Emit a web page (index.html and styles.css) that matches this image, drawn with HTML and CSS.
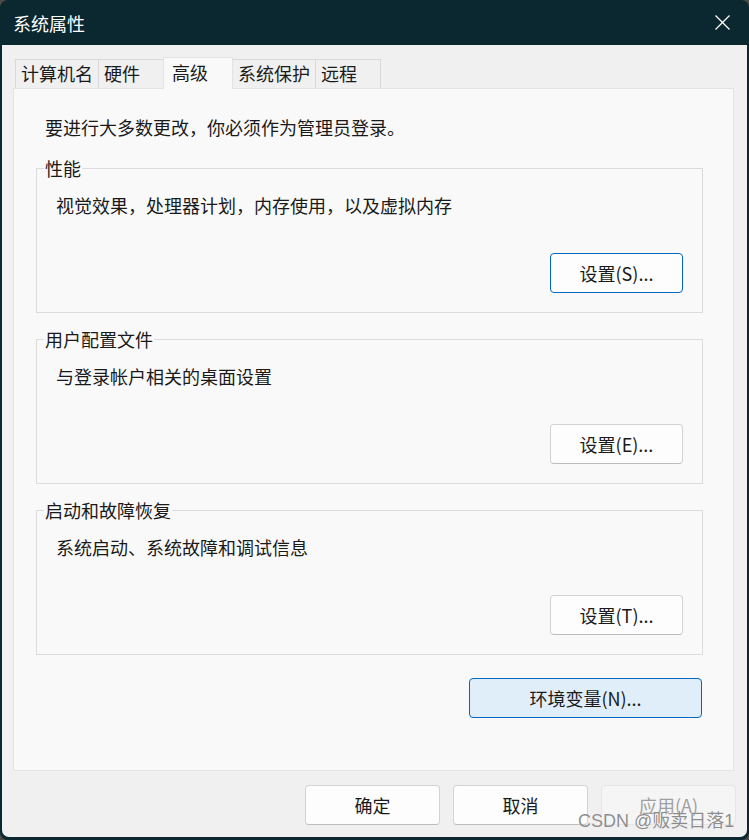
FILE: index.html
```html
<!DOCTYPE html>
<html lang="zh-CN">
<head>
<meta charset="utf-8">
<title>系统属性</title>
<link rel="stylesheet" href="styles.css">
</head>
<body>
<div class="window">
  <div class="titlebar">
    <span class="title">系统属性</span>
    <svg class="close" width="15" height="15" viewBox="0 0 15 15"><path d="M0.5 0.5 L14.5 14.5 M14.5 0.5 L0.5 14.5" stroke="#ffffff" stroke-width="1.3" fill="none"/></svg>
  </div>
  <div class="client">
    <div class="tabs">
      <div class="tab">计算机名</div>
      <div class="tab">硬件</div>
      <div class="tab active">高级</div>
      <div class="tab">系统保护</div>
      <div class="tab">远程</div>
    </div>
    <div class="pane">
      <p class="intro">要进行大多数更改，你必须作为管理员登录。</p>
      <fieldset class="group">
        <legend>性能</legend>
        <p class="desc">视觉效果，处理器计划，内存使用，以及虚拟内存</p>
        <div class="row"><button class="btn small default">设置(S)...</button></div>
      </fieldset>
      <fieldset class="group">
        <legend>用户配置文件</legend>
        <p class="desc">与登录帐户相关的桌面设置</p>
        <div class="row"><button class="btn small">设置(E)...</button></div>
      </fieldset>
      <fieldset class="group">
        <legend>启动和故障恢复</legend>
        <p class="desc">系统启动、系统故障和调试信息</p>
        <div class="row"><button class="btn small">设置(T)...</button></div>
      </fieldset>
      <div class="row env-row"><button class="btn env">环境变量(N)...</button></div>
    </div>
    <div class="footer">
      <button class="btn wide">确定</button>
      <button class="btn wide">取消</button>
      <button class="btn wide" disabled>应用(A)</button>
    </div>
  </div>
  <div class="watermark">CSDN @贩卖日落1</div>
</div>
</body>
</html>
```
FILE: styles.css
```css
* { box-sizing: border-box; }

html, body {
  margin: 0;
  padding: 0;
}

body {
  width: 749px;
  height: 840px;
  background: #4e4b44;
  font-family: "Noto Sans CJK SC", "Noto Sans", sans-serif;
  font-size: 18px;
  color: #1a1a1a;
  overflow: hidden;
}

.window {
  position: relative;
  width: 749px;
  height: 840px;
  background: #0b2730;
  border-radius: 8px;
  padding: 0 2px 3px 2px;
  display: flex;
  flex-direction: column;
}

.titlebar {
  height: 45px;
  flex: none;
  display: flex;
  align-items: center;
  padding-left: 11px;
  color: #ffffff;
}

.title {
  font-size: 18px;
  line-height: 24px;
}

.close {
  margin-left: auto;
  margin-right: 17px;
  display: block;
}

.client {
  flex: 1;
  background: #f0f0f0;
  border-radius: 0 0 7px 7px;
  padding: 12px 13px 12px 11px;
  display: flex;
  flex-direction: column;
}

.tabs {
  height: 31px;
  display: flex;
  align-items: flex-end;
  padding-left: 2px;
}

.tab {
  height: 29px;
  min-width: 66px;
  padding: 0 5px 0 5px;
  border: 1px solid #d9d9d9;
  border-bottom: none;
  background: #f0f0f0;
  line-height: 27px;
  margin-left: -1px;
  white-space: nowrap;
}

.tab:first-child {
  margin-left: 0;
}

.tab.active {
  position: relative;
  z-index: 1;
  height: 32px;
  min-width: 70px;
  margin-bottom: -1px;
  padding-left: 8px;
  background: #f9f9f9;
  border-color: #e3e3e3;
  line-height: 28px;
}

.pane {
  height: 683px;
  flex: none;
  background: #f9f9f9;
  border: 1px solid #e3e3e3;
  padding: 26px 30px 0 22px;
}

.intro {
  margin: 0 0 0 9px;
  line-height: 24px;
}

.group {
  margin: 18px 0 0 0;
  padding: 0 19px 19px 7px;
  border: 1px solid #dcdcdc;
  min-width: 0;
}

.group + .group {
  margin-top: 15px;
}

.group legend {
  padding: 0 1px;
  line-height: 23px;
  font-size: 18px;
}

.desc {
  margin: 13px 0 0 12px;
  line-height: 24px;
}

.row {
  display: flex;
  justify-content: flex-end;
  margin-top: 36px;
}

.env-row {
  margin-top: 23px;
  margin-right: 1px;
}

.btn {
  height: 40px;
  padding: 0;
  font-family: "Noto Sans CJK SC", "Noto Sans", sans-serif;
  font-size: 18px;
  color: #1a1a1a;
  background: #fdfdfd;
  border: 1px solid #d3d3d3;
  border-bottom-color: #bdbdbd;
  border-radius: 4px;
  line-height: 38px;
}

.btn.small {
  width: 133px;
}

.btn.default {
  border-color: #0067c0;
}

.btn.env {
  width: 233px;
  background: #e0eef9;
  border-color: #0067c0;
}

.btn.wide {
  width: 135px;
}

.btn:disabled {
  background: #f5f5f5;
  border-color: #e5e5e5;
  color: #a0a0a0;
}

.footer {
  display: flex;
  justify-content: flex-end;
  gap: 13px;
  margin-top: 14px;
  margin-right: -2px;
}

.watermark {
  position: absolute;
  left: 578px;
  top: 809px;
  font-family: "Liberation Sans", "Noto Sans CJK SC", sans-serif;
  font-size: 18px;
  line-height: 24px;
  color: rgba(120, 120, 120, 0.85);
  text-shadow: 0 0 1px #ffffff;
  white-space: nowrap;
}
```
